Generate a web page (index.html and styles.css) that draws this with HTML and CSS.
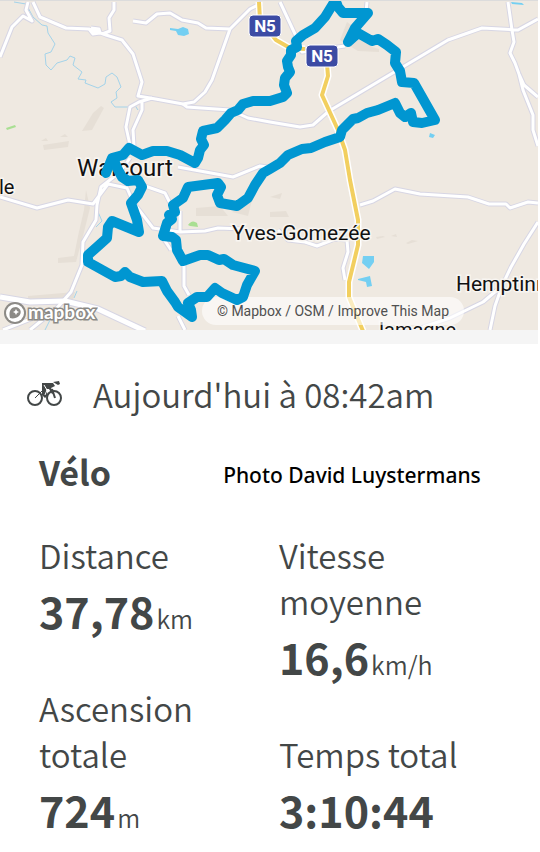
FILE: index.html
```
<!DOCTYPE html>
<html lang="fr">
    <head>
        <meta charset="utf-8">
        <meta name="viewport" content="width=device-width, initial-scale=1">
        <title>Vélo</title>
        <link rel="stylesheet" href="styles.css">
    </head>
    <body>
        <div class="map">
            <svg class="map_canvas" viewBox="0 1 538 329" preserveAspectRatio="xMidYMid slice">
                <defs>
                    <g id="lanes">
                        <path d="M28 2L26 10L32 21L23 16L12 27L0 57M33 2L40 17L66 28L89 29L106 35L122 40L133 54L142 82L138 96L150 98L183 104L194 102L205 92L212 80L230 29L250 9L262 3M114 2L114 10L109 18L110 31L102 34M89 29L93 34L100 33L99 29L91 28M133 21L146 23L157 14L170 13L182 20L198 23L206 28L230 29"/>
                        <path d="M130 145L126 127L130 107L139 102L152 98M142 102L142 110L133 130L134 146M183 104L187 107L230 110L248 118L270 122L300 127L313 125L329 111L448 40L482 28L518 30L538 19M280 2L295 34L302 52L345 46M367 2L366 12M508 2L512 30L514 42L510 53L515 63L519 74L524 85L538 97M519 74L523 90L533 115L533 130L538 146"/>
                        <path d="M130 158L120 172L101 187L97 205L96 220L83 242L82 265L71 292L56 309L30 330M0 197L37 208L68 200L93 204L108 184L127 188L133 202L153 228L180 232L205 231L218 228L243 229M145 186L165 193L172 207M163 238L171 250M184 262L184 286L189 295M180 211L180 231M178 167L233 177L260 166L275 168"/>
                        <path d="M360 205L373 201L395 189L420 194L468 197L489 204L506 204L510 208L528 202L538 203M538 222L524 244L511 267L502 286L483 302L450 318L420 328M502 286L495 306L490 330M278 230L288 240L305 242L317 246L335 239L347 240L348 252L343 268L345 280M178 316L185 330M56 309L3 330"/>
                    </g>
                    <path id="highway" d="M259 2L260 20L276 40L290 48L305 49M327 64L328 76L322 95L338 130L345 150L350 180L358 220L358 245L349 282L349 297L363 331"/>
                    <path id="bypass" d="M0 297L30 302L65 301L98 309L145 331"/>
                </defs>
                <!-- terrain -->
                <g class="land">
                    <path d="M101 106L104 108L92 130L82 131L93 113Z"/>
                    <path d="M43 145L69 141L68 147L44 150ZM60 137L65 134L68 137ZM41 141L46 138L48 141Z"/>
                    <path d="M347 22L358 30L372 47L379 49L379 52L358 51L340 40Z"/>
                    <path d="M86 190L90 208L84 232L76 262L58 263L58 258L74 256L78 236L84 210Z"/>
                    <path d="M28 296L75 292L73 300L28 300Z"/>
                    <path d="M196 208L220 206L228 216L196 216ZM232 212L252 200L248 216Z"/>
                    <path d="M270 212L286 211L289 217L270 217ZM270 197L282 193L280 199Z"/>
                    <path d="M376 237L383 236L385 237L377 239ZM391 236L396 234L397 237ZM406 243L412 240L418 241L408 244Z"/>
                </g>
                <path class="green" d="M6 128L15 125L16 127L7 130ZM188 225Q192 219 197 223L198 227L190 226Z"/>
                <path class="water" d="M170 28L178 29L183 27L188 29L189 34L184 36L178 35L176 31L170 30Z"/>
                <path class="water" d="M430 133L435 135L433 138L429 137ZM363 256L374 256L374 262L369 269L362 263ZM358 279L370 276L372 286L367 287L366 282L358 280ZM511 2L522 3L524 5L512 4Z"/>
                <path class="river" d="M14 2L26 4L33 17L42 25L47 26L48 33L55 44L51 52L45 54L46 65L51 70L57 63L67 60L70 56L75 58L73 65L82 72L78 79L86 80L85 83L98 88L105 84L106 77L112 73L117 77L121 87L116 92L117 98L111 102L115 107L130 107L134 104L138 110"/>
                <path class="river" d="M98 212L102 221L96 227M77 291L74 298M50 320L45 330"/>

                <use class="road_case" href="#lanes"/>
                <use class="road_case wide" href="#bypass"/>
                <use class="road" href="#lanes"/>
                <use class="road wide" href="#bypass"/>
                <use class="main_case" href="#highway"/>
                <use class="main" href="#highway"/>

                <g class="places">
                    <text class="town" x="77" y="176">Walcourt</text>
                    <text x="232" y="240">Yves-Gomezée</text>
                    <text x="456" y="291">Hemptinne</text>
                    <text class="small" x="-1" y="194">le</text>
                    <text class="small" x="373" y="337">Jamagne</text>
                </g>
            </svg>
            <a class="map_logo" href="#" aria-label="Mapbox">
                <svg viewBox="0 0 96 26" width="96" height="26">
                    <circle cx="13" cy="13" r="11" fill="#8c8a86"/>
                    <circle cx="13" cy="13" r="9" fill="#fff"/>
                    <path d="M8 18C6 10 10 7 14 7C19 8 20 13 17 16C15 18 11 19 8 18Z" fill="#8c8a86"/>
                    <path d="M14 9L15 11L17 12L15 13L14 15L13 13L11 12L13 11Z" fill="#fff"/>
                    <text x="26" y="19">mapbox</text>
                </svg>
            </a>
            <p class="map_credit">
                <a href="#">© Mapbox</a> / <a href="#">OSM</a> / <a href="#">Improve This Map</a>
            </p>
            <!-- ride track, stays above the credit -->
            <svg class="map_track" viewBox="0 1 538 329" preserveAspectRatio="xMidYMid slice">
                <path class="route" d="M333 4L325 17L315 28L303 35L296 41L297 47L291 50L291 55L287 61L288 67L290 72L285 78L284 85L287 93L283 97L270 101L253 101L243 104L238 110L231 113L225 120L217 128L203 131L201 139L204 145L200 150L198 158L195 163L180 155L167 151L153 151L142 155L129 148L123 155L112 158L106 173"/>
                <path class="route" d="M114 160L117 168L122 177L128 181L138 180L142 187L138 195L131 203L137 220L139 232L112 221L108 227L107 238L97 247L88 255L88 262L115 277L121 276L125 272L130 277L143 282L162 281L167 291L175 302L178 307L192 317L191 310L188 303L197 297L207 297L215 288L222 293L237 300L243 297L247 285L255 271L233 265L224 259L219 260L208 255L200 255L183 261L177 250L176 240L172 237L163 236L167 223L172 219L169 215L175 212L173 205L183 198L188 187L218 183L221 187L217 195L220 203L237 206L248 198L255 185L263 173L270 169L280 163L288 155L302 149L311 148L325 142L340 137L342 130L353 119L358 118L367 113L378 110L395 103L400 113L405 117L411 113L413 122L422 123L435 120L414 83L402 82L400 71L395 63L396 52L387 45L378 39L372 41L358 33L348 42L355 28L368 13L343 13L338 7L337 4"/>
                <g class="shield">
                    <rect x="249" y="15" width="32" height="22" rx="4"/>
                    <text x="265" y="32">N5</text>
                    <rect x="306" y="45" width="32" height="22" rx="4"/>
                    <text x="322" y="62">N5</text>
                </g>
            </svg>
        </div>
        <main class="activity">
            <header>
                <svg class="bike" viewBox="0 0 36 26" width="36" height="26">
                    <g fill="none" stroke="#434747" stroke-width="2">
                        <circle cx="8" cy="17" r="7"/>
                        <circle cx="27" cy="17" r="7"/>
                        <path d="M25 8L28 17"/>
                        <path d="M8 17L15 10" stroke-width="1"/>
                    </g>
                    <path d="M15 2L26 2L28 5L24 7L27 12L25 13L22 8L19 8L21 14L18 17L15 14Z" fill="#434747"/>
                    <path d="M17 4L20 9L18 14" fill="none" stroke="#fff"/>
                    <path d="M26 1L32 0L33 3L31 4Z" fill="#434747"/>
                </svg>
                <p class="date">Aujourd'hui à 08:42am</p>
            </header>
            <div class="title">
                <h1>Vélo</h1>
                <p class="author">Photo David Luystermans</p>
            </div>
            <div class="stats">
                <dl>
                    <dt>Distance</dt>
                    <dd>37,78<span>km</span></dd>
                    <dt>Ascension totale</dt>
                    <dd>724<span>m</span></dd>
                </dl>
                <dl>
                    <dt>Vitesse moyenne</dt>
                    <dd>16,6<span>km/h</span></dd>
                    <dt>Temps total</dt>
                    <dd>3:10:44</dd>
                </dl>
            </div>
        </main>
    </body>
</html>
```
FILE: styles.css
```
*{
margin: 0;
padding: 0;
box-sizing: border-box;
}
body{
padding-right: 2px;
background: #fff;
color: #434747;
font-family: "Noto Sans CJK SC", "Noto Sans", sans-serif;
}
a{
color: inherit;
text-decoration: none;
}
.map{
position: relative;
height: 344px;
border-top: 1px solid #dcdcdc;
border-bottom: 14px solid #f5f5f5;
background: #efe9e1;
overflow: hidden;
}
.map_canvas{
display: block;
width: 100%;
height: 100%;
}
.map_track{
position: absolute;
top: 0;
left: 0;
width: 100%;
height: 100%;
pointer-events: none;
}
.land{
fill: #e6dfd6;
}
.green{
fill: #a9df93;
}
.water{
fill: #74cff2;
}
.river{
fill: none;
stroke: #a3d3ea;
stroke-width: 1;
}
.road_case, .road, .main_case, .main, .route{
fill: none;
stroke-linejoin: round;
}
.road_case{
stroke: #d7d6e4;
stroke-width: 5;
}
.road{
stroke: #fff;
stroke-width: 3;
}
.road_case.wide{
stroke-width: 7;
}
.road.wide{
stroke-width: 5;
}
.main_case{
stroke: #fff;
stroke-width: 7;
}
.main{
stroke: #f2cf5f;
stroke-width: 4;
}
.route{
stroke: #0096d1;
stroke-width: 10;
stroke-linecap: round;
}
.places text{
font-family: Roboto, sans-serif;
font-size: 21px;
fill: #111;
stroke: #f8f5f1;
stroke-width: 3;
paint-order: stroke;
}
.places .town{
font-size: 24px;
}
.places .small{
font-size: 20px;
}
.shield rect{
fill: #3c4ba4;
stroke: #fff;
stroke-width: 1;
}
.shield text{
font-family: Roboto, sans-serif;
font-size: 17px;
font-weight: 700;
fill: #fff;
text-anchor: middle;
}
.map_logo{
position: absolute;
left: 2px;
bottom: 4px;
}
.map_logo svg{
display: block;
}
.map_logo text{
font-family: Lato, sans-serif;
font-size: 19px;
font-weight: 700;
fill: #fff;
stroke: #8c8a86;
stroke-width: 3;
paint-order: stroke;
}
.map_credit{
position: absolute;
right: 74px;
bottom: 5px;
padding: 0 15px;
border-radius: 14px;
background: rgba(255,255,255,0.6);
font: 14px/28px Roboto, sans-serif;
color: #505050;
}
.activity{
padding: 0 24px 12px 39px;
}
.activity header{
display: flex;
align-items: center;
gap: 30px;
margin: 27px 0 0 -12px;
}
.date{
font-size: 33px;
font-weight: 350;
line-height: 46px;
}
.title{
display: flex;
align-items: center;
gap: 112px;
margin-top: 32px;
}
h1{
font-size: 34px;
line-height: 46px;
}
.author{
padding-top: 6px;
font: 500 21px/28px "Noto Sans", sans-serif;
color: #000;
}
.stats{
display: grid;
grid-template-columns: 1fr 1fr;
column-gap: 5px;
margin-top: 37px;
}
dt{
max-width: 200px;
font-size: 33px;
font-weight: 350;
line-height: 46px;
}
dd{
font-size: 43px;
font-weight: 700;
line-height: 64px;
}
dd + dt{
margin-top: 35px;
}
dd span{
margin-left: 2px;
font-size: 25px;
font-weight: 350;
}
```
